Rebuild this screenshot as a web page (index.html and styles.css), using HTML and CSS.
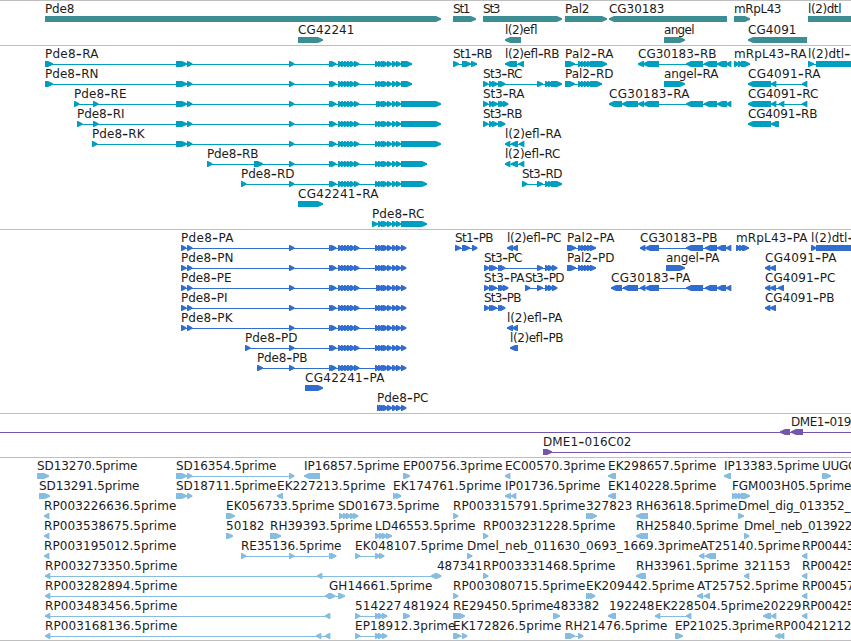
FILE: index.html
```
<!DOCTYPE html>
<html lang="en">
<head>
    <meta charset="UTF-8">
    <meta name="viewport" content="width=device-width, initial-scale=1.0">
    <title>Genome Browser</title>
    <link rel="stylesheet" href="styles.css">
</head>
<body>
    <div class="browser">
        <section class="track genes" id="genes"></section>
        <section class="track transcripts" id="transcripts"></section>
        <section class="track proteins" id="proteins"></section>
        <section class="track clones" id="clones"></section>
        <section class="track ests" id="ests"></section>
    </div>
    <script src="tracks.js"></script>
</body>
</html>
```
FILE: styles.css
```
body {
    margin: 0;
    background: #fff;
    overflow: hidden;
    font-family: "DejaVu Sans", Verdana, sans-serif;
}

.browser {
    display: flex;
    flex-direction: column;
    width: 851px;
    border-bottom: 1px solid #bfbfbf;
}

.track {
    display: flex;
    flex-direction: column;
    border-top: 1px solid #bfbfbf;
    padding-bottom: 3px;
}

.row {
    display: block;
    width: 851px;
    height: 20px;
    overflow: visible;
}

.row text {
    font-size: 12px;
    fill: #1c1c1c;
}

.row .dash {
    font-size: 17px;
}

.genes {
    color: #3d8e94;
    padding-bottom: 2px;
}

.genes .row {
    height: 21px;
}

.transcripts {
    color: #009fc0;
}

.proteins {
    color: #316dcf;
}

.clones {
    color: #7656a8;
}

.ests {
    color: #86bcdf;
    padding-bottom: 2px;
}

.block,
.intron {
    fill: currentColor;
}

.intron {
    shape-rendering: crispEdges;
}
```
FILE: tracks.js
```
// One line per row, features split by ";"
// name, label start-end, strand, blocks ("a-b", or just "a" for a 5px one)
// "a~b" draws the connecting line further than the blocks
const mid = '289 329 331 338 341 344 347 350 354';
const tail = '378 381 383 387 392 396';

const tracks = {
    genes: [
        'Pde8 45-75 > 45-441; St1 453-471 > 453-476; St3 483-501 > 483-562; Pal2 565-590 > 565-607; CG30183 609-665 < 609-727; mRpL43 734-782 > 734-750; l(2)dtl 808-842 > 808-870',
        'CG42241 298-355 > 298-323; l(2)efl 505-538 < 505-521; angel 664-695 > 664-685; CG4091 748-797 < 748-807'
    ],
    transcripts: [
        `Pde8-RA 45-99 > 45-53 176-187 187 ${mid} 375 ${tail} 401-412; St1-RB 453-493 > 453-459 462-471 471-477; l(2)efl-RB 505-560 < 505-517 518-524; Pal2-RA 565-614 > 565-575 578 581 584 587 590-607; CG30183-RB 638-717 < 638-644 643-659 686-703 704-717 717-727 726; mRpL43-RA 734-807 > 734 738 741-750; l(2)dtl-RA 808-867 > 808-814 816-870`,
        `Pde8-RN 45-99 > 45-53 176-187 187 ${mid} 375 ${tail} 401-412; St3-RC 483-523 > 483 489 492-498 498 500 537-543 545 548 551-562; Pal2-RD 565-614 > 565-575 578 581 584 587 590-602; angel-RA 664-719 > 664-685; CG4091-RA 748-821 < 748-771 771 802`,
        `Pde8-RE 74-127 > 74 93 176-187 187 ${mid} 376 ${tail} 401-441; St3-RA 483-525 > 483 489 492-498 498 500 503; CG30183-RA 609-690 < 609-622 622-638 638-644 643-659 686-703 704-717 717-727 726; CG4091-RC 748-819 < 748-771 771 779 802`,
        `Pde8-RI 77-125 > 77 93 176-187 187 ${mid} 375 ${tail} 401-441; St3-RB 483-523 > 483 489 492-498 498 500; CG4091-RB 748-818 < 748-771 771-779`,
        `Pde8-RK 92-145 > 92 176-187 187 ${mid} 375 ${tail} 401-441; l(2)efl-RA 505-562 < 505 511-518 519`,
        `Pde8-RB 207-259 > 207 254-263 ${mid} 375 ${tail} 401-427; l(2)efl-RC 505-561 < 505 511-518 519`,
        `Pde8-RD 241-295 > 241 ${mid} 375 ${tail} 401-427; St3-RD 522-563 > 522 537-543 545 548 551-562`,
        'CG42241-RA 298-379 > 298-323',
        `Pde8-RC 372-425 > 372-378 ${tail} 401-427`
    ],
    proteins: [
        `Pde8-PA 181-234 > 181 187 ${mid} 375 ${tail} 401; St1-PB 455-494 > 455-461 462-470 472; l(2)efl-PC 507-562 < 507-513 512-518; Pal2-PA 567-615 > 567-576 578 581 584 587 590-596; CG30183-PB 640-718 < 640 645-659 686-703 705-717 717-726 726; mRpL43-PA 736-808 > 736 739 742-749; l(2)dtl-PA 811-869 > 811 816-870`,
        `Pde8-PN 181-234 > 181 187 ${mid} 375 ${tail} 401; St3-PC 484-523 > 484 489 491-497 498 500 537-543 545 548 552; Pal2-PD 567-615 > 567-576 578 581 584 587 590-596; angel-PA 666-720 > 666-685; CG4091-PA 765-837 < 765 770-776`,
        `Pde8-PE 181-232 > 181 187 ${mid} 376 ${tail} 401; St3-PA 484-525 > 484 489 491-497 498 500 503; St3-PD 525-565 > 525 537-543 545 548 552; CG30183-PA 611-691 < 611-622 623-638 640 645-659 686-703 705-717 717-726 726; CG4091-PC 765-836 < 765 770-776 778-784`,
        `Pde8-PI 181-228 > 181 187 ${mid} 375 ${tail} 401; St3-PB 484-522 > 484 489 491-497 498 500; CG4091-PB 765-835 < 765 770-776`,
        `Pde8-PK 181-233 > 181 187 ${mid} 375 ${tail} 401; l(2)efl-PA 507-563 < 507-513 512-518`,
        `Pde8-PD 245-298 > 245 ${mid} 375 ${tail} 401; l(2)efl-PB 510-564 < 510-518`,
        `Pde8-PB 257-308 > 257-263 ${mid} 375 ${tail} 401`,
        'CG42241-PA 305-385 > 305-323',
        `Pde8-PC 377-429 > 377 379 381 383 387 392 396 401`
    ],
    clones: [
        'DME1-019 791-852 < 0~870 780-790 791-803',
        'DME1-016C02 543-632 > 543-552 543~870'
    ],
    ests: [
        'SD13270.5prime 37-138 > 37-49; SD16354.5prime 176-277 > 176-187 187 289; IP16857.5prime 304-400 < 304-320; EP00756.3prime 403-503 > 403-410; EC00570.3prime 505-606 < 505; EK298657.5prime 608-717 < 608-616; IP13383.5prime 724-820 < 724-731; UUGC 822-857 > 822-831',
        'SD13291.5prime 39-140 > 39-50; SD18711.5prime 176-277 > 176-187 187; EK227213.5prime 277-386 < 277-283; EK174761.5prime 393-502 > 393 396; IP01736.5prime 505-601 < 505-511 511; EK140228.5prime 608-717 < 608-616; FGM003H05.5prime 732-852 > 732 735 738 741-750',
        'RP003226636.5prime 44-177 < 44; EK056733.5prime 226-335 > 226-235; SD01673.5prime 338-440 > 339 343 346 350 353; RP003315791.5prime 453-586 > 453; 327823 586-633 > 586 588 590-597; RH63618.5prime 636-738 < 636-648; Dmel_dig_013352_ 738-851 > 738-744',
        'RP003538675.5prime 44-177 < 44; 50182 226-265 > 226-233; RH39393.5prime 270-373 > 270-281; LD46553.5prime 375-476 > 375 379 382 386-392; RP003231228.5prime 483-616 > 483; RH25840.5prime 636-739 < 636-648; Dmel_neb_013922 744-853 > 744',
        'RP003195012.5prime 44-177 < 44; RE35136.5prime 241-342 > 241 289 329 331; EK048107.5prime 355-464 > 355 375 379; Dmel_neb_011630_0693_1669.3prime 467-701 > 467; AT25140.5prime 700-801 < 699 705-716; RP00443 802-855 < 802',
        'RP003273350.5prime 45-178 < 45 317 431; 487341 437-483 > 436; RP003331468.5prime 483-616 > 483; RH33961.5prime 636-739 < 636-646; 321153 744-791 < 744; RP00425 802-855 < 802',
        'RP003282894.5prime 45-178 < 45 325; GH14661.5prime 329-433 > 328 330 338-345; RP003080715.5prime 453-586 > 453; EK209442.5prime 586-695 > 586 588 590; AT25752.5prime 697-799 < 697-703 704-710; RP00457 802-855 < 802',
        'RP003483456.5prime 45-178 < 45 325; 514227 355-402 > 355 375 378 382; 481924 403-450 > 403-410; RE29450.5prime 453-554 > 453-465; 483382 553-600 > 553-560; 192248 609-655 < 608-616; EK228504.5prime 655-764 < 655 686; 20229 763-802 < 763-771 771; RP00425 802-855 < 802',
        'RP003168136.5prime 45-178 < 45 316 325; EP18912.3prime 355-456 > 355 375 378 382; EK172826.5prime 453-562 > 453-461 462; RH21476.5prime 565-668 > 565-575 578; EP21025.3prime 675-775 > 675-683; RP00421212 775-852 < 775 779'
    ]
};

// full height for the first pixel, then a stepped-looking blunt tip
function block(a, b, strand) {
    const head = Math.min(5, b - a - 1);
    const points = strand === '>'
        ? `${a},15 ${b - head},15 ${b},17.3 ${b},18.7 ${b - head},21 ${a},21`
        : `${b},15 ${a + head},15 ${a},17.3 ${a},18.7 ${a + head},21 ${b},21`;
    return `<polygon class="block" points="${points}"/>`;
}

function feature(text) {
    const [name, label, strand, ...parts] = text.trim().split(' ');
    const [from, to] = label.split('-').map(Number);
    let shapes = '';
    let min = Infinity;
    let max = 0;
    parts.forEach(part => {
        const range = part.split(/[-~]/).map(Number);
        const single = range.length === 1;
        const a = range[0];
        const b = single ? a + 5 : range[1];
        min = Math.min(min, a);
        max = Math.max(max, b);
        if (!part.includes('~')) {
            shapes += block(a, single ? b + 0.4 : b, strand);
        }
    });
    if (parts.length > 1) {
        shapes += `<rect class="intron" x="${min}" y="18" width="${max - min}" height="1"/>`;
    }
    const html = name.replace(/-(.)/, '<tspan class="dash" dy="1">-</tspan><tspan dy="-1">$1</tspan>');
    return `<text x="${from}" y="12" textLength="${to - from - 0.5}">${html}</text>${shapes}`;
}

for (const id in tracks) {
    document.getElementById(id).innerHTML = tracks[id]
        .map(row => `<svg class="row">${row.split(';').map(feature).join('')}</svg>`)
        .join('');
}
```
